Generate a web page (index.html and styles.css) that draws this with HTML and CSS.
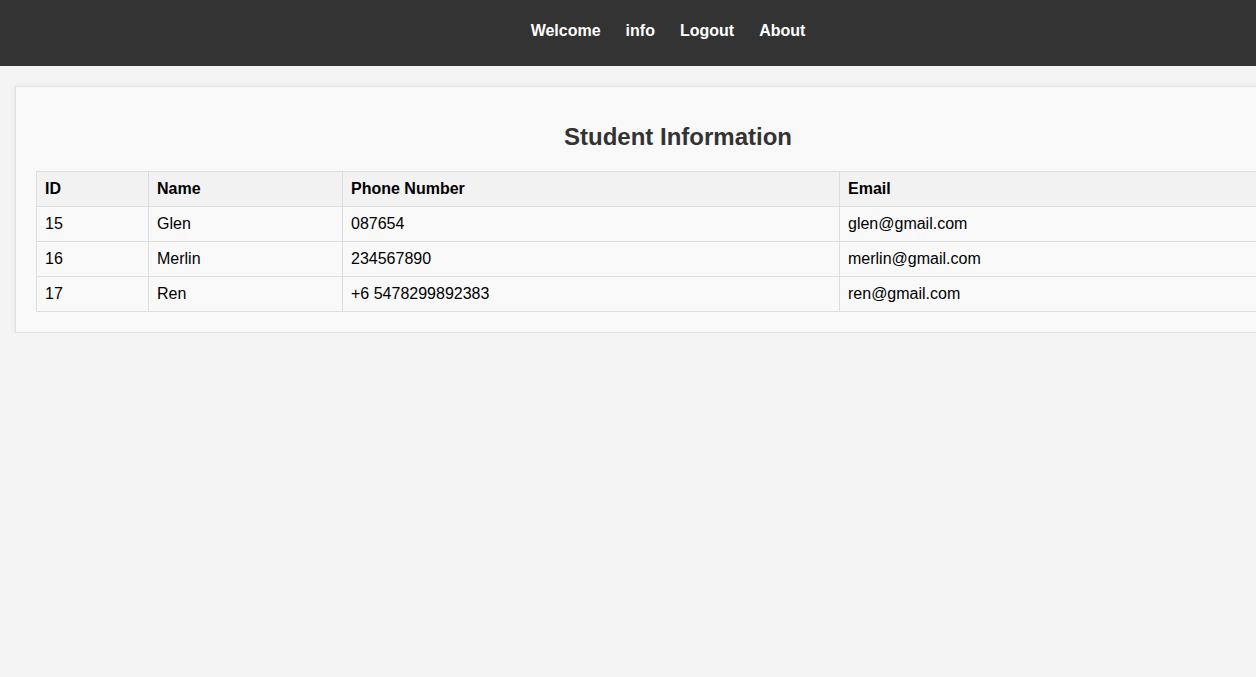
FILE: index.html
```html
<!DOCTYPE html>
<html>
<head>
<meta charset="utf-8">
<link rel="stylesheet" href="styles.css">
</head>
<body>
<nav class="topnav">
  <a href="#">Welcome</a>
  <a href="#">info</a>
  <a href="#">Logout</a>
  <a href="#">About</a>
</nav>
<div class="container">
  <h2 class="title">Student Information</h2>
  <table class="students">
    <thead>
      <tr><th class="c-id">ID</th><th class="c-name">Name</th><th class="c-phone">Phone Number</th><th>Email</th></tr>
    </thead>
    <tbody>
      <tr><td>15</td><td>Glen</td><td>087654</td><td>glen@gmail.com</td></tr>
      <tr><td>16</td><td>Merlin</td><td>234567890</td><td>merlin@gmail.com</td></tr>
      <tr><td>17</td><td>Ren</td><td>+6 5478299892383</td><td>ren@gmail.com</td></tr>
    </tbody>
  </table>
</div>
</body>
</html>
```
FILE: styles.css
```css
html, body {
  overflow-x: hidden;
}
body {
  margin: 0;
  background: #f4f4f4;
  font-family: "Liberation Sans", Arial, sans-serif;
  font-size: 16px;
  color: #000;
}
.topnav {
  background: #333;
  height: 66px;
  box-sizing: border-box;
  display: flex;
  justify-content: center;
  gap: 25px;
  padding-left: 80px;
  padding-top: 22px;
}
.topnav a {
  color: #fff;
  font-weight: bold;
  text-decoration: none;
  line-height: 18px;
}
.container {
  margin: 20px 0 0 15px;
  width: 1284px;
  padding: 20px;
  background: #f9f9f9;
  border: 1px solid #e2e2e2;
  box-shadow: 0 0 6px rgba(0,0,0,0.08);
}
.title {
  margin: 16px 0 20px;
  text-align: center;
  font-size: 24px;
  color: #333;
}
.students {
  width: 100%;
  border-collapse: collapse;
}
.students th, .students td {
  border: 1px solid #ddd;
  padding: 8px;
  text-align: left;
  line-height: 18px;
}
.students th {
  background: #f2f2f2;
  font-weight: bold;
}
.c-id { width: 95px; }
.c-name { width: 177px; }
.c-phone { width: 480px; }
```
